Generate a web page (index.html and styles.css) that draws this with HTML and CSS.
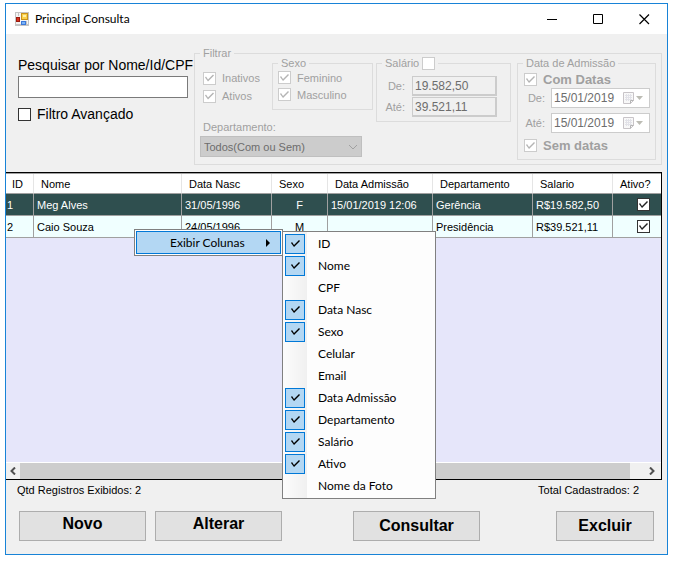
FILE: index.html
```html
<!DOCTYPE html>
<html lang="pt-BR">
<head>
<meta charset="utf-8">
<title>Principal Consulta</title>
<link rel="stylesheet" href="styles.css">
</head>
<body>
<main class="window">
  <header class="titlebar">
    <svg class="app-icon" width="14" height="14" viewBox="0 0 14 14" aria-hidden="true">
      <rect x="0.5" y="0.5" width="13" height="13" fill="#f4f4f4" stroke="#c4c4c4"/>
      <path d="M11.5 9v4M3.500 0v4M0 12.500h14" stroke="#c4c4c4"/>
      <rect x="6.500" y="1.500" width="6" height="6" fill="#fbd048" stroke="#c8921c"/>
      <rect x="8" y="3" width="3" height="2" fill="#fff0a8"/>
      <rect x="1.500" y="5.500" width="3" height="4" fill="#d8301c" stroke="#9c1c10"/>
      <rect x="6.500" y="9.500" width="4" height="3" fill="#7ab4f8" stroke="#3c78d8"/>
    </svg>
    <h1 class="title">Principal Consulta</h1>
    <button class="win-btn" type="button" aria-label="Minimizar"><svg width="11" height="11" viewBox="0 0 11 11"><path d="M0 5.500h10" stroke="#000"/></svg></button>
    <button class="win-btn" type="button" aria-label="Maximizar"><svg width="11" height="11" viewBox="0 0 11 11"><path d="M0.500 0.500h9v9h-9z" fill="none" stroke="#000"/></svg></button>
    <button class="win-btn" type="button" aria-label="Fechar"><svg width="11" height="11" viewBox="0 0 11 11"><path d="M0.500 0.500l9.500 9.500M10 0.500L0.500 10" stroke="#000" stroke-width="1.200"/></svg></button>
  </header>

  <form class="filters">
    <div class="search">
      <label for="busca">Pesquisar por Nome/Id/CPF</label>
      <input class="search-box" id="busca" type="text">
      <label class="check"><input type="checkbox">Filtro Avançado</label>
    </div>
    <fieldset class="group filter-group" disabled>
      <legend>Filtrar</legend>
      <div class="filter-row">
        <div class="filter-left">
          <div class="left-top">
            <div class="status-checks">
              <label class="check"><input type="checkbox" checked>Inativos</label>
              <label class="check"><input type="checkbox" checked>Ativos</label>
            </div>
            <fieldset class="group sex-group">
              <legend>Sexo</legend>
              <label class="check"><input type="checkbox" checked>Feminino</label>
              <label class="check"><input type="checkbox" checked>Masculino</label>
            </fieldset>
          </div>
          <label class="dept-label" for="dept">Departamento:</label>
          <div class="dept">
            <select id="dept"><option>Todos(Com ou Sem)</option></select>
            <svg class="chevron" width="10" height="6" viewBox="0 0 10 6" aria-hidden="true"><path d="M1 1l4 4 4-4" fill="none" stroke="#a0a0a0"/></svg>
          </div>
        </div>
        <fieldset class="group salary-group">
          <legend><label class="check legend-check">Salário <input type="checkbox"></label></legend>
          <div class="field"><label for="sal-de">De:</label><input id="sal-de" type="text" value="19.582,50"></div>
          <div class="field"><label for="sal-ate">Até:</label><input id="sal-ate" type="text" value="39.521,11"></div>
        </fieldset>
        <fieldset class="group date-group">
          <legend>Data de Admissão</legend>
          <label class="check strong"><input type="checkbox" checked>Com Datas</label>
          <div class="field date">
            <label for="dt-de">De:</label>
            <div class="date-box"><input id="dt-de" type="text" value="15/01/2019">
              <svg width="21" height="13" viewBox="0 0 21 13" aria-hidden="true"><path d="M0.500 0.500h10v8l-3 3h-7z" fill="#f8f8f8" stroke="#c8c4c8"/><path d="M2 3.500h7M2 5.500h7M2 7.500h7M3.500 2v7M5.500 2v7M7.500 2v7" stroke="#e2e2e8"/><path d="M10.500 8.500h-3v3" fill="none" stroke="#b4b4b4"/><path d="M13 4h7l-3.500 4z" fill="#bcbcb4"/></svg>
            </div>
          </div>
          <div class="field date">
            <label for="dt-ate">Até:</label>
            <div class="date-box"><input id="dt-ate" type="text" value="15/01/2019">
              <svg width="21" height="13" viewBox="0 0 21 13" aria-hidden="true"><path d="M0.500 0.500h10v8l-3 3h-7z" fill="#f8f8f8" stroke="#c8c4c8"/><path d="M2 3.500h7M2 5.500h7M2 7.500h7M3.500 2v7M5.500 2v7M7.500 2v7" stroke="#e2e2e8"/><path d="M10.500 8.500h-3v3" fill="none" stroke="#b4b4b4"/><path d="M13 4h7l-3.500 4z" fill="#bcbcb4"/></svg>
            </div>
          </div>
          <label class="check strong"><input type="checkbox" checked>Sem datas</label>
        </fieldset>
      </div>
    </fieldset>
  </form>

  <section class="grid">
    <table>
      <colgroup><col class="c-id"><col><col class="c-nasc"><col class="c-sexo"><col class="c-adm"><col class="c-dept"><col class="c-sal"><col class="c-ativo"></colgroup>
      <thead>
        <tr><th>ID</th><th>Nome</th><th>Data Nasc</th><th>Sexo</th><th>Data Admissão</th><th>Departamento</th><th>Salario</th><th>Ativo?</th></tr>
      </thead>
      <tbody>
        <tr class="selected"><td>1</td><td>Meg Alves</td><td>31/05/1996</td><td class="mid">F</td><td>15/01/2019 12:06</td><td>Gerência</td><td>R$19.582,50</td><td class="tick"><input type="checkbox" checked aria-label="Ativo"></td></tr>
        <tr><td>2</td><td>Caio Souza</td><td>24/05/1996</td><td class="mid">M</td><td></td><td>Presidência</td><td>R$39.521,11</td><td class="tick"><input type="checkbox" checked aria-label="Ativo"></td></tr>
      </tbody>
    </table>
    <div class="scrollbar">
      <button type="button" aria-label="Rolar para a esquerda"><svg width="6" height="8" viewBox="0 0 6 8"><path d="M5 0.500L1.500 4 5 7.500" fill="none" stroke="#505050" stroke-width="2"/></svg></button>
      <div class="thumb"></div>
      <button class="scroll-right" type="button" aria-label="Rolar para a direita"><svg width="6" height="8" viewBox="0 0 6 8"><path d="M1 0.500L4.500 4 1 7.500" fill="none" stroke="#505050" stroke-width="2"/></svg></button>
    </div>
  </section>

  <div class="status"><span>Qtd Registros Exibidos: 2</span><span>Total Cadastrados: 2</span></div>

  <footer class="actions">
    <button class="raised" type="button">Novo</button>
    <button class="raised" type="button">Alterar</button>
    <button class="view" type="button">Consultar</button>
    <button class="delete" type="button">Excluir</button>
  </footer>

  <div class="menu context" role="menu">
    <button class="menu-parent" type="button" role="menuitem">Exibir Colunas<svg width="4" height="8" viewBox="0 0 4 8" aria-hidden="true"><path d="M0 0l4 4-4 4z"/></svg></button>
  </div>
  <div class="menu columns" role="menu">
    <label class="item"><input type="checkbox" checked>ID</label>
    <label class="item"><input type="checkbox" checked>Nome</label>
    <label class="item"><input type="checkbox">CPF</label>
    <label class="item"><input type="checkbox" checked>Data Nasc</label>
    <label class="item"><input type="checkbox" checked>Sexo</label>
    <label class="item"><input type="checkbox">Celular</label>
    <label class="item"><input type="checkbox">Email</label>
    <label class="item"><input type="checkbox" checked>Data Admissão</label>
    <label class="item"><input type="checkbox" checked>Departamento</label>
    <label class="item"><input type="checkbox" checked>Salário</label>
    <label class="item"><input type="checkbox" checked>Ativo</label>
    <label class="item"><input type="checkbox">Nome da Foto</label>
  </div>
</main>
</body>
</html>
```
FILE: styles.css
```css
* { box-sizing: border-box; }
body {
  margin: 0;
  padding: 3px 6px 6px 5px;
  min-height: 100vh;
  display: flex;
  background: #fff;
  font: 11px/14px "Liberation Sans", Arial, sans-serif;
  color: #000;
}
button, input, select { font: inherit; color: inherit; margin: 0; padding: 0; }
svg { display: block; }

.window {
  position: relative;
  flex: 1;
  display: flex;
  flex-direction: column;
  border: 1px solid #1883d7;
  background: #f0f0f0;
}

.titlebar { display: flex; align-items: center; height: 30px; padding-left: 9px; background: #fff; }
.title { flex: 1; margin: 0 0 0 6px; font: 12px/16px Lato, "Open Sans", sans-serif; }
.win-btn { width: 46px; height: 28px; border: 0; background: none; display: grid; place-items: center; }

.filters { display: flex; gap: 6px; padding: 14px 5px 7px 12px; }
.search { width: 170px; padding-top: 8px; font-size: 14px; line-height: 18px; white-space: nowrap; }
.search > label:first-child { display: block; }
.search-box { display: block; width: 100%; height: 22px; margin: 2px 0 7px; padding: 0 3px; border: 1px solid #7a7a7a; background: #fff; }

.check { display: flex; align-items: center; gap: 6px; }
input[type="checkbox"] {
  appearance: none;
  flex: none;
  position: relative;
  width: 13px;
  height: 13px;
  border: 1px solid #333;
  background: #fff;
}
input[type="checkbox"]:disabled { border-color: #ccc; }
input[type="checkbox"]:checked::before {
  content: "";
  position: absolute;
  inset: 0;
  background: #222;
  clip-path: polygon(1px 5px, 2px 4px, 4px 7px, 9px 2px, 10px 3px, 4px 9px);
}
input[type="checkbox"]:disabled:checked::before { background: #b4b4b4; }

.group { min-width: 0; margin: 0; padding: 0; border: 1px solid #dcdcdc; color: #a0a0a0; }
.group legend { margin-left: 5px; padding: 0 3px; line-height: 10px; }
.filter-group { flex: 1; height: 117px; }
.filter-row { display: flex; align-items: flex-start; padding: 0 5px; }
.filter-left { width: 173px; margin-right: auto; }
.left-top { display: flex; justify-content: space-between; padding-left: 3px; }
.status-checks { display: grid; align-content: start; gap: 4px; padding-top: 13px; }
.sex-group { width: 101px; height: 52px; }
.sex-group legend { margin-bottom: 1px; }
.sex-group .check { padding-left: 5px; height: 17px; }
.dept-label { display: block; padding: 10px 0 2px 3px; }
.dept { position: relative; width: 162px; }
.dept select { display: block; appearance: none; width: 100%; height: 21px; padding-left: 3px; border: 1px solid #bfbfbf; border-radius: 0; background: #ccc; color: #6d6d6d; opacity: 1; }
.chevron { position: absolute; right: 4px; top: 8px; }
.salary-group { width: 135px; height: 64px; margin-right: 6px; }
.legend-check { gap: 3px; height: 10px; }
.field { display: flex; align-items: center; justify-content: flex-end; gap: 7px; padding-right: 13px; margin-bottom: 1px; }
.salary-group legend + .field { margin-top: 8px; }
.field input { width: 85px; height: 20px; padding: 0 2px; border: 1px solid #ccc; border-width: 1px 2px 2px 1px; border-color: #ccc; background: #f0f0f0; color: #6d6d6d; font-size: 12px; }
.date-group { width: 139px; height: 102px; }
.date-group > .check { height: 15px; padding: 0 0 0 6px; margin: 4px 0 1px; }
.strong { font-size: 13px; font-weight: bold; }
.date { padding-right: 5px; gap: 6px; margin-bottom: 5px; }
.date-box { display: flex; align-items: center; width: 99px; height: 20px; padding-right: 5px; border: 1px solid #ccc; background: #fff; }
.date-box input { flex: 1; min-width: 0; height: 18px; border: 0; background: none; }

.grid { flex: 1; display: flex; flex-direction: column; margin-right: 5px; border: solid #000; border-width: 1px 1px 1px 0; background: #e6e6fa; }
table { width: 100%; table-layout: fixed; border-collapse: separate; border-spacing: 0; background: #fff; border-top: 1px solid #a0a0a0; white-space: nowrap; }
.c-id { width: 28px; }
.c-nasc { width: 90px; }
.c-sexo { width: 56px; }
.c-adm { width: 105px; }
.c-dept { width: 100px; }
.c-sal { width: 80px; }
.c-ativo { width: 48px; }
th { height: 20px; padding: 0 0 0 7px; border-right: 1px solid #e5e5e5; border-bottom: 1px solid #a0a0a0; font-weight: normal; text-align: left; }
td { height: 22px; padding: 0 0 0 3px; border-right: 1px solid #a0a0a0; border-bottom: 1px solid #a0a0a0; background: #f0ffff; }
th:first-child { padding-left: 6px; }
td:first-child { padding-left: 1px; }
th:last-child, td:last-child { border-right: 0; }
.selected td { background: #2f4f4f; color: #fff; }
.mid { text-align: center; padding: 0; }
.tick { padding-left: 24px; }
.tick input { display: block; }
.scrollbar { display: flex; height: 17px; margin-top: auto; border-top: 1px solid #fff; background: #f0f0f0; }
.scrollbar button { width: 14px; border: 0; background: none; display: grid; place-items: center; }
.thumb { flex: 1; margin-right: 13px; background: #cdcdcd; }
.scrollbar .scroll-right { width: 18px; }

.status { display: flex; justify-content: space-between; padding: 3px 28px 0 11px; }
.actions { display: flex; padding: 14px 13px 13px; font-size: 16px; font-weight: bold; line-height: 20px; }
.actions button { width: 127px; height: 30px; margin-right: 9px; border: 1px solid #adadad; background: #e1e1e1; }
.actions .raised { padding-bottom: 4px; }
.actions .view { margin-left: 62px; }
.actions .delete { width: 98px; margin: 0 0 0 auto; }

.menu { position: absolute; border: 1px solid #808080; background: #fdfdfd; font: 12px/16px Lato, "Open Sans", sans-serif; }
.context { left: 128px; top: 225px; width: 149px; padding: 1px; }
.menu-parent { display: flex; align-items: center; justify-content: space-between; width: 100%; height: 23px; padding: 0 10px 0 33px; border: 1px solid #0078d7; background: #b3d7f3; }
.columns { left: 276px; top: 227px; width: 154px; padding: 1px 2px; background: linear-gradient(to right, #fcfcfc, #f0f0f0 24px, #fdfdfd 24px); }
.item { display: flex; align-items: center; gap: 13px; height: 22px; }
.item input[type="checkbox"] { width: 20px; height: 20px; border-color: transparent; background: none; }
.item input[type="checkbox"]:checked { border-color: #0078d7; background: #b3d7f3; }
.item input[type="checkbox"]:checked::before { inset: 3px 4px 5px; background: #000; }
```
